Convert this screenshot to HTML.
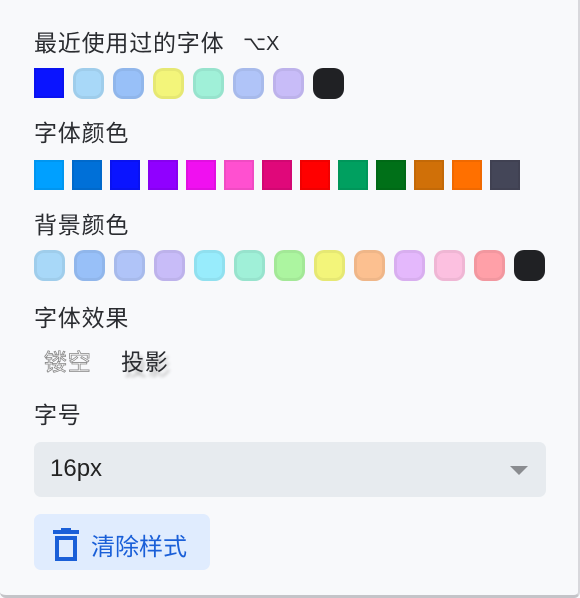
<!DOCTYPE html>
<html><head><meta charset="utf-8"><style>
body{margin:0;width:580px;height:598px;background:#f8f9fb;font-family:"Liberation Sans","Noto Sans CJK SC",sans-serif;color:#2a2c30;position:relative;overflow:hidden}
.frame{position:absolute;left:0;top:0;width:578px;height:595px;border-right:2px solid #d8d8dc;border-bottom:3px solid #c4c4c8;border-radius:0 0 6px 6px}
.t{position:absolute;left:34px;font-size:23px;line-height:26px;white-space:nowrap;letter-spacing:0.8px}
.row{position:absolute;left:34px;display:flex}
.s{width:30px;height:30px;margin-right:8px;box-sizing:border-box;border:2px solid rgba(0,0,0,.06)}
.r{width:31px;height:31px;border-radius:10px;box-sizing:border-box;border:3px solid rgba(0,0,0,.05)}
.sel{position:absolute;left:34px;top:442px;width:512px;height:55px;background:#e7ebef;border-radius:7px}
.btn{position:absolute;left:34px;top:514px;width:176px;height:56px;background:#e0ecfe;border-radius:7px;color:#1a5fd8}
</style></head><body>
<div class="frame"></div>
<div class="t" style="top:30px">最近使用过的字体<span style="position:absolute;left:209px;top:1px;font-size:20px;letter-spacing:0">⌥X</span></div>
<div class="row" style="top:68px;gap:9px">
<div class="s" style="background:#0a14ff;margin:0"></div>
<div class="r" style="background:#a8d8f8"></div><div class="r" style="background:#98c0f8"></div><div class="r" style="background:#f3f57a"></div><div class="r" style="background:#a0f0d8"></div><div class="r" style="background:#b0c4f8"></div><div class="r" style="background:#c8bcf8"></div><div class="r" style="background:#202124;border:0"></div>
</div>
<div class="t" style="top:120px">字体颜色</div>
<div class="row" style="top:160px">
<div class="s" style="background:#00a0ff"></div><div class="s" style="background:#0070d8"></div><div class="s" style="background:#0a14ff"></div><div class="s" style="background:#9000ff"></div><div class="s" style="background:#f010f0"></div><div class="s" style="background:#ff50d0"></div><div class="s" style="background:#e0087a"></div><div class="s" style="background:#ff0000"></div><div class="s" style="background:#00a060"></div><div class="s" style="background:#007018"></div><div class="s" style="background:#d07008"></div><div class="s" style="background:#ff7000"></div><div class="s" style="background:#444658"></div>
</div>
<div class="t" style="top:212px">背景颜色</div>
<div class="row" style="top:250px;gap:9px">
<div class="r" style="background:#a8d8f8"></div><div class="r" style="background:#98c0f8"></div><div class="r" style="background:#b0c4f8"></div><div class="r" style="background:#c8bcf8"></div><div class="r" style="background:#98ecfc"></div><div class="r" style="background:#a0f0d8"></div><div class="r" style="background:#acf5a0"></div><div class="r" style="background:#f3f57a"></div><div class="r" style="background:#fcc090"></div><div class="r" style="background:#e4b8fc"></div><div class="r" style="background:#fcc0e0"></div><div class="r" style="background:#ffa0a8"></div><div class="r" style="background:#202124;border:0"></div>
</div>
<div class="t" style="top:305px">字体效果</div>
<div class="t" style="top:349px;left:44px;color:#fff;-webkit-text-stroke:0.8px #888">镂空</div>
<div class="t" style="top:349px;left:121px;text-shadow:3px 5px 3px #bbb">投影</div>
<div class="t" style="top:402px">字号</div>
<div class="sel"><span style="position:absolute;left:16px;top:13px;font-size:24px;color:#222">16px</span>
<span style="position:absolute;right:18px;top:24px;width:0;height:0;border-left:9px solid transparent;border-right:9px solid transparent;border-top:9px solid #8a8c90"></span></div>
<div class="btn">
<svg style="position:absolute;left:19px;top:14px" width="26" height="33" viewBox="0 0 26 33"><rect x="0" y="2" width="26" height="4" fill="#1a5fd8"/><rect x="8" y="0" width="10" height="3" fill="#1a5fd8"/><rect x="4" y="10" width="18" height="21" fill="none" stroke="#1a5fd8" stroke-width="4"/></svg>
<span style="position:absolute;left:57px;top:13px;font-size:24px">清除样式</span></div>
</body></html>
